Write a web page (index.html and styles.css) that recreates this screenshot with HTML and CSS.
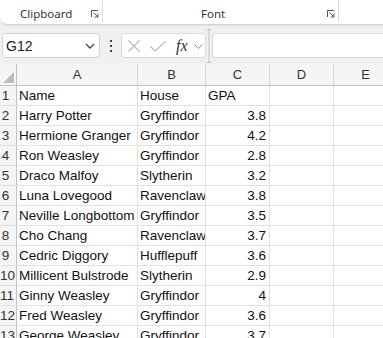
FILE: index.html
```html
<!DOCTYPE html>
<html>
<head>
<meta charset="utf-8">
<link rel="stylesheet" href="styles.css">
</head>
<body>
<div class="app">
  <div class="ribbon">
    <div class="group g-clip">
      <span class="glabel">Clipboard</span>
      <svg class="launch" width="8" height="8" viewBox="0 0 8 8"><path d="M0.5 7V0.5H7M2.5 2.5L7 7M7 3.5V7H3.5" fill="none" stroke="#555" stroke-width="1"/></svg>
    </div>
    <div class="group g-font">
      <span class="glabel">Font</span>
      <svg class="launch" width="8" height="8" viewBox="0 0 8 8"><path d="M0.5 7V0.5H7M2.5 2.5L7 7M7 3.5V7H3.5" fill="none" stroke="#555" stroke-width="1"/></svg>
    </div>
    <div class="group g-rest"></div>
  </div>

  <div class="fbar">
    <div class="namebox">
      <span class="nbtext">G12</span>
      <svg width="10" height="6" viewBox="0 0 10 6"><path d="M1 1L5 5L9 1" fill="none" stroke="#444" stroke-width="1.3"/></svg>
    </div>
    <div class="dots"><i></i><i></i><i></i></div>
    <div class="fbtns">
      <svg class="ic-x" width="12" height="12" viewBox="0 0 12 12"><path d="M0.5 0.5L11.5 11.5M11.5 0.5L0.5 11.5" fill="none" stroke="#b8b8b8" stroke-width="1.1"/></svg>
      <svg class="ic-check" width="16" height="11" viewBox="0 0 16 11"><path d="M0.5 5.5L5 10L15.5 0.5" fill="none" stroke="#b8b8b8" stroke-width="1.1"/></svg>
      <span class="fx">fx</span>
      <svg class="ic-chev" width="9" height="5" viewBox="0 0 9 5"><path d="M0.5 0.5L4.5 4.5L8.5 0.5" fill="none" stroke="#8a8a8a" stroke-width="1"/></svg>
    </div>
    <div class="splitter">
      <svg width="6" height="34" viewBox="0 0 6 34"><path d="M3 0V34M1 0.5H5M1 33.5H5" fill="none" stroke="#c4c4c4" stroke-width="1"/></svg>
    </div>
    <div class="finput"></div>
  </div>

  <div class="grid">
    <div class="hc corner"><svg width="11" height="11" viewBox="0 0 11 11"><path d="M11 0V11H0Z" fill="#bdbdbd"/></svg></div>
    <div class="hc">A</div><div class="hc">B</div><div class="hc">C</div><div class="hc">D</div><div class="hc">E</div>

    <div class="rh">1</div><div class="c">Name</div><div class="c">House</div><div class="c">GPA</div><div class="c"></div><div class="c"></div>
    <div class="rh">2</div><div class="c">Harry Potter</div><div class="c">Gryffindor</div><div class="c n">3.8</div><div class="c"></div><div class="c"></div>
    <div class="rh">3</div><div class="c">Hermione Granger</div><div class="c">Gryffindor</div><div class="c n">4.2</div><div class="c"></div><div class="c"></div>
    <div class="rh">4</div><div class="c">Ron Weasley</div><div class="c">Gryffindor</div><div class="c n">2.8</div><div class="c"></div><div class="c"></div>
    <div class="rh">5</div><div class="c">Draco Malfoy</div><div class="c">Slytherin</div><div class="c n">3.2</div><div class="c"></div><div class="c"></div>
    <div class="rh">6</div><div class="c">Luna Lovegood</div><div class="c">Ravenclaw</div><div class="c n">3.8</div><div class="c"></div><div class="c"></div>
    <div class="rh">7</div><div class="c">Neville Longbottom</div><div class="c">Gryffindor</div><div class="c n">3.5</div><div class="c"></div><div class="c"></div>
    <div class="rh">8</div><div class="c">Cho Chang</div><div class="c">Ravenclaw</div><div class="c n">3.7</div><div class="c"></div><div class="c"></div>
    <div class="rh">9</div><div class="c">Cedric Diggory</div><div class="c">Hufflepuff</div><div class="c n">3.6</div><div class="c"></div><div class="c"></div>
    <div class="rh">10</div><div class="c">Millicent Bulstrode</div><div class="c">Slytherin</div><div class="c n">2.9</div><div class="c"></div><div class="c"></div>
    <div class="rh">11</div><div class="c">Ginny Weasley</div><div class="c">Gryffindor</div><div class="c n">4</div><div class="c"></div><div class="c"></div>
    <div class="rh">12</div><div class="c">Fred Weasley</div><div class="c">Gryffindor</div><div class="c n">3.6</div><div class="c"></div><div class="c"></div>
    <div class="rh">13</div><div class="c">George Weasley</div><div class="c">Gryffindor</div><div class="c n">3.7</div><div class="c"></div><div class="c"></div>
  </div>
</div>
</body>
</html>
```

FILE: styles.css
```css
html, body {
  margin: 0;
  padding: 0;
}
body {
  width: 383px;
  height: 338px;
  overflow: hidden;
  background: #f0f0f0;
  font-family: "Liberation Sans", Arial, sans-serif;
}
.app {
  width: 383px;
  height: 338px;
  overflow: hidden;
}

/* Ribbon */
.ribbon {
  display: flex;
  height: 25px;
  box-sizing: border-box;
  background: #ffffff;
  border-bottom: 1px solid #d4d4d4;
  border-bottom-left-radius: 8px;
  box-shadow: 0 1px 2px rgba(0, 0, 0, 0.06);
  width: 400px;
}
.group {
  display: flex;
  align-items: center;
  height: 22px;
  padding-top: 6px;
  box-sizing: border-box;
  border-right: 1px solid #dedede;
}
.g-clip {
  width: 103px;
  padding-left: 20px;
}
.g-font {
  width: 236px;
  padding-left: 98px;
}
.g-rest {
  flex: 1;
  border-right: none;
}
.glabel {
  font-family: "Noto Sans", "Open Sans", sans-serif;
  font-size: 11.5px;
  color: #333;
  line-height: 14px;
}
.launch {
  margin-left: auto;
  margin-right: 3px;
  margin-top: -1px;
}

/* Formula bar */
.fbar {
  display: flex;
  align-items: flex-start;
  height: 39px;
  padding-top: 8px;
  box-sizing: border-box;
}
.namebox {
  margin-left: 2px;
  width: 98px;
  height: 25px;
  box-sizing: border-box;
  background: #fff;
  border: 1px solid #d3d3d3;
  border-radius: 4px;
  display: flex;
  align-items: center;
  justify-content: space-between;
  padding: 0 4px 0 3px;
}
.nbtext {
  font-size: 14px;
  color: #222;
}
.dots {
  width: 21px;
  height: 25px;
  display: flex;
  flex-direction: column;
  align-items: center;
  justify-content: center;
  gap: 3px;
}
.dots i {
  display: block;
  width: 2px;
  height: 2px;
  background: #444;
}
.fbtns {
  width: 85px;
  height: 25px;
  box-sizing: border-box;
  background: #fff;
  border: 1px solid #d9d9d9;
  border-radius: 4px;
  display: flex;
  align-items: center;
  padding-left: 6px;
}
.ic-x {
  margin-right: 10px;
}
.ic-check {
  margin-right: 10px;
  margin-top: 1px;
}
.fx {
  font-family: "Liberation Serif", "Times New Roman", serif;
  font-style: italic;
  font-size: 16px;
  color: #333;
  margin-right: 6px;
  line-height: 16px;
}
.ic-chev {
  margin-top: 1px;
}
.splitter {
  width: 6px;
  height: 34px;
  margin-top: -4px;
  display: flex;
}
.finput {
  flex: 1;
  height: 25px;
  box-sizing: border-box;
  background: #fff;
  border: 1px solid #d9d9d9;
  border-right: none;
  border-radius: 4px 0 0 4px;
}

/* Grid */
.grid {
  display: grid;
  grid-template-columns: 17px 121px 68px 64px 64px 64px;
  grid-template-rows: 22px repeat(13, 20px);
  width: 400px;
}
.hc {
  background: #f5f5f5;
  border-right: 1px solid #d6d6d6;
  border-bottom: 1px solid #c2c2c2;
  box-sizing: border-box;
  font-size: 13px;
  color: #333;
  text-align: center;
  line-height: 22px;
}
.corner {
  display: flex;
  justify-content: flex-end;
  align-items: flex-end;
  padding: 0 2px 2px 0;
  border-right: 1px solid #c2c2c2;
}
.rh {
  background: #f5f5f5;
  border-right: 1px solid #c2c2c2;
  border-bottom: 1px solid #e0e0e0;
  box-sizing: border-box;
  font-size: 13.5px;
  color: #333;
  line-height: 20px;
  width: 17px;
  padding-right: 5px;
  text-align: center;
  white-space: nowrap;
  overflow: visible;
}
.c {
  background: #fff;
  border-right: 1px solid #e1e1e1;
  border-bottom: 1px solid #e1e1e1;
  box-sizing: border-box;
  font-size: 13.5px;
  color: #111;
  line-height: 20px;
  padding-left: 2px;
  white-space: nowrap;
  overflow: hidden;
}
.n {
  text-align: right;
  padding-right: 3px;
}
```
